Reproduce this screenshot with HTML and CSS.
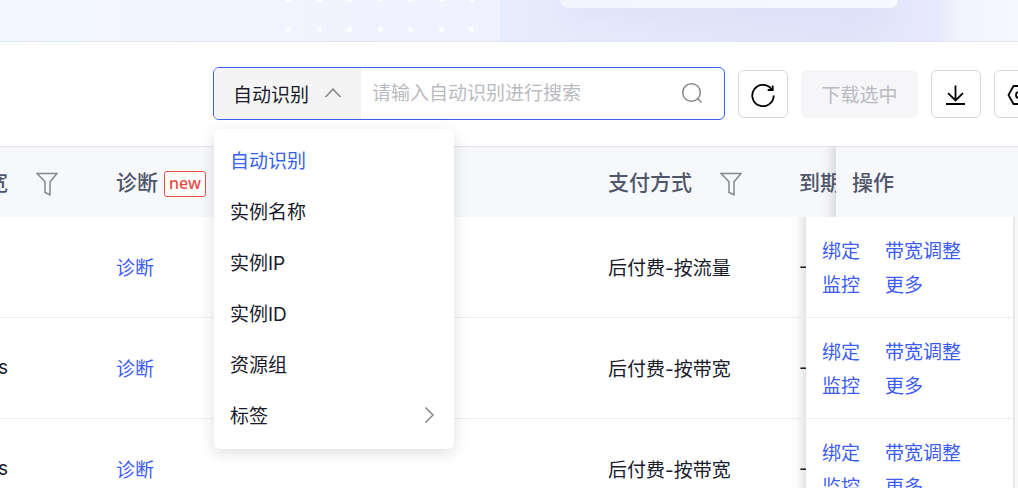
FILE: index.html
```html
<!DOCTYPE html>
<html lang="zh-CN">

<head>
    <meta charset="UTF-8" />
    <meta name="viewport" content="width=device-width, initial-scale=1.0" />
    <title>实例</title>
    <link rel="stylesheet" href="styles.css">
</head>

<body>
    <div class="banner">
        <div class="banner-left">
            <div class="dots">
                <i></i><i></i><i></i><i></i><i></i><i></i><i></i>
                <i></i><i></i><i></i><i></i><i></i><i></i><i></i>
            </div>
        </div>
        <div class="banner-mid">
            <div class="banner-card"></div>
        </div>
        <div class="banner-right"></div>
    </div>

    <div class="toolbar">
        <div class="search">
            <button type="button" class="search-type" aria-haspopup="listbox" aria-expanded="true">
                自动识别
                <svg width="18" height="18" viewBox="0 0 18 18"><path d="M1.500 13 9 5.200l7.500 7.800" /></svg>
            </button>
            <input type="text" aria-label="搜索" placeholder="请输入自动识别进行搜索">
            <button type="button" class="search-btn" aria-label="搜索">
                <svg width="22" height="22" viewBox="0 0 22 22">
                    <circle cx="10.500" cy="10.500" r="8.800" />
                    <path d="m16.500 16.500 4 4" />
                </svg>
            </button>
            <ul class="menu" role="listbox">
                <li class="active" role="option" aria-selected="true">自动识别</li>
                <li role="option">实例名称</li>
                <li role="option">实例IP</li>
                <li role="option">实例ID</li>
                <li role="option">资源组</li>
                <li role="option">标签
                    <svg width="18" height="18" viewBox="0 0 18 18"><path d="m5.500 2.500 7.500 7.500-7.500 7.500" /></svg>
                </li>
            </ul>
        </div>
        <button type="button" class="icon-btn" aria-label="刷新">
            <svg width="26" height="26" viewBox="0 0 26 26">
                <path d="M23.700 14.500A10.700 10.700 0 1 1 21.500 8" />
                <path d="M22.700 4.500v4.500h-5" />
            </svg>
        </button>
        <button type="button" class="text-btn" disabled>下载选中</button>
        <button type="button" class="icon-btn" aria-label="下载">
            <svg width="26" height="26" viewBox="0 0 26 26">
                <path d="M12.500 4.500v15M5 12.200l7.500 7.200 7.500-7.200M3 23h19" />
            </svg>
        </button>
        <button type="button" class="icon-btn" aria-label="设置">
            <svg width="26" height="26" viewBox="0 0 26 26">
                <path d="M7.500 5h11l5 9-5 9h-11l-5-9z" />
                <circle cx="13" cy="14" r="3" />
            </svg>
        </button>
    </div>

    <table>
        <colgroup>
            <col class="col-bandwidth">
            <col>
            <col class="col-pay">
            <col class="col-expire">
            <col class="col-overlap">
            <col class="col-action">
            <col class="col-gutter">
        </colgroup>
        <thead>
            <tr>
                <th>
                    <span class="tail">宽</span>
                    <svg class="filter" width="22" height="24" viewBox="0 0 22 24"><path d="M1 1.500h20l-7 8.300v13l-5-2.300V9.800z" /></svg>
                </th>
                <th>诊断<span class="tag">new</span></th>
                <th>
                    支付方式
                    <svg class="filter" width="22" height="24" viewBox="0 0 22 24"><path d="M1 1.500h20l-7 8.300v13l-5-2.300V9.800z" /></svg>
                </th>
                <th class="shade" colspan="2">到期</th>
                <th colspan="2">操作</th>
            </tr>
        </thead>
        <tbody>
            <tr>
                <td></td>
                <td><a href="#">诊断</a></td>
                <td>后付费-按流量</td>
                <td class="shade">-</td>
                <td colspan="2">
                    <div class="actions">
                        <a href="#">绑定</a><a href="#">带宽调整</a>
                        <a href="#">监控</a><a href="#">更多</a>
                    </div>
                </td>
                <td class="gutter"></td>
            </tr>
            <tr>
                <td><span class="tail">s</span></td>
                <td><a href="#">诊断</a></td>
                <td>后付费-按带宽</td>
                <td class="shade">-</td>
                <td colspan="2">
                    <div class="actions">
                        <a href="#">绑定</a><a href="#">带宽调整</a>
                        <a href="#">监控</a><a href="#">更多</a>
                    </div>
                </td>
                <td class="gutter"></td>
            </tr>
            <tr>
                <td><span class="tail">s</span></td>
                <td><a href="#">诊断</a></td>
                <td>后付费-按带宽</td>
                <td class="shade">-</td>
                <td colspan="2">
                    <div class="actions">
                        <a href="#">绑定</a><a href="#">带宽调整</a>
                        <a href="#">监控</a><a href="#">更多</a>
                    </div>
                </td>
                <td class="gutter"></td>
            </tr>
        </tbody>
    </table>
</body>

</html>
```

FILE: styles.css
```css
:root {
    --primary-color: #3662ec;
    --link-color: #3d5cf5;
    --text-color: #191b2a;
    --head-color: #50566a;
    --icon-color: #85878c;
    --line-color: #ebecf0;
    --head-bg: #f7f8fc;
}

* {
    box-sizing: border-box;
}

body {
    margin: 0;
    height: 100vh;
    overflow: hidden;
    font-family: Inter, "Noto Sans CJK SC", sans-serif;
    font-size: 19px;
    color: var(--text-color);
    background: #fff;
}

button,
input {
    font: inherit;
    color: inherit;
    border: none;
    background: none;
    padding: 0;
}

svg {
    fill: none;
    stroke: var(--icon-color);
    stroke-width: 1.5;
    flex: none;
}

a {
    color: var(--link-color);
    text-decoration: none;
}

/* banner */
.banner {
    display: grid;
    grid-template-columns: 500px 439px 1fr;
    height: 42px;
    border-bottom: 1px solid #dfe4f4;
}

.banner-left {
    background: linear-gradient(90deg, #f3f7ff, #f0f2ff);
    overflow: hidden;
}

.dots {
    display: grid;
    grid-template-columns: repeat(7, 5px);
    justify-content: space-between;
    row-gap: 25px;
    width: 188px;
    margin: -3px 0 0 286px;
}

.dots i {
    height: 5px;
    border-radius: 2px;
    background: #fff;
}

.banner-mid {
    padding: 0 41px 0 60px;
    background: linear-gradient(90deg, #e7edfc, #e3e7fa 40%, #e1e4f9 80%, #e8e9fc);
    overflow: hidden;
}

.banner-card {
    height: 8px;
    border-radius: 0 0 8px 8px;
    background: linear-gradient(90deg, #f2f5fd, #f7f9ff);
    box-shadow: 0 6px 20px rgba(205, 205, 240, 0.4);
}

.banner-right {
    background: linear-gradient(90deg, #e7ebf8, #f1f4fe 20px, #f5f8ff);
}

/* toolbar */
.toolbar {
    display: flex;
    align-items: center;
    gap: 13px;
    height: 104px;
    padding-left: 213px;
    margin-right: -26px;
}

.search {
    position: relative;
    flex: 1;
    display: flex;
    height: 53px;
    margin-bottom: 2px;
    border: 1px solid var(--primary-color);
    border-radius: 6px;
}

.search-type {
    display: flex;
    align-items: center;
    justify-content: space-between;
    width: 147px;
    padding: 0 19px;
    border-radius: 5px 0 0 5px;
    background: #f4f4f4;
}

.search input {
    flex: 1;
    min-width: 0;
    padding: 0 11px;
    outline: none;
}

.search input::placeholder {
    color: #b9bbc0;
}

.search-btn {
    width: 22px;
    margin-right: 21px;
}

.search-btn svg {
    display: block;
}

.menu {
    position: absolute;
    top: 61px;
    left: 0;
    z-index: 2;
    width: 240px;
    margin: 0;
    padding: 5px 0 9px;
    list-style: none;
    border-radius: 6px;
    background: #fff;
    box-shadow: 0 4px 16px rgba(0, 0, 0, 0.13);
}

.menu li {
    display: flex;
    align-items: center;
    justify-content: space-between;
    height: 51px;
    padding: 0 16px;
}

.menu .active {
    color: var(--primary-color);
}

.icon-btn {
    display: flex;
    align-items: center;
    justify-content: center;
    width: 50px;
    height: 48px;
    border: 1px solid #d8d8da;
    border-radius: 6px;
}

.icon-btn svg {
    stroke: #000;
    stroke-width: 1.8;
}

.text-btn {
    width: 117px;
    height: 48px;
    padding-bottom: 2px;
    border-radius: 6px;
    color: #b9bbc0;
    background: #f6f6f9;
}

/* table */
table {
    width: calc(100% + 20px);
    margin-left: -20px;
    table-layout: fixed;
    border-collapse: separate;
    border-spacing: 0;
}

.col-bandwidth {
    width: 120px;
}

.col-pay {
    width: 191px;
}

.col-expire {
    width: 23px;
}

.col-overlap {
    width: 30px;
}

.col-action {
    width: 177px;
}

.col-gutter {
    width: 5px;
}

th,
td {
    padding: 0 0 2px 16px;
    text-align: left;
    white-space: nowrap;
    overflow: hidden;
}

th:first-child,
td:first-child {
    padding-left: 0;
}

th {
    height: 71px;
    font-size: 21px;
    font-weight: 500;
    color: var(--head-color);
    background: var(--head-bg);
    border-top: 1px solid #e2e4ea;
}

td {
    height: 101px;
    border-bottom: 1px solid var(--line-color);
}

.tail {
    display: inline-block;
    width: 28px;
    text-align: right;
}

.filter {
    margin-left: 22px;
    vertical-align: -6px;
}

.tag {
    display: inline-block;
    height: 26px;
    margin-left: 6px;
    padding: 0 4px;
    font: 500 16px/23px "Noto Sans", sans-serif;
    color: #e34d45;
    background: #fff;
    border: 1px solid #e34d45;
    border-radius: 3px;
    vertical-align: 1px;
}

.shade {
    background-image: linear-gradient(to left, rgba(0, 0, 0, 0.1), rgba(0, 0, 0, 0.02) 9px, transparent 16px);
}

.actions {
    display: grid;
    grid-template-columns: 38px auto;
    justify-content: start;
    column-gap: 25px;
    padding-top: 5px;
    line-height: 34px;
}

.gutter {
    padding: 0;
    border-bottom: none;
    background: linear-gradient(90deg, #e6e6e8 2px, #f9f9fa 2px);
}
```
